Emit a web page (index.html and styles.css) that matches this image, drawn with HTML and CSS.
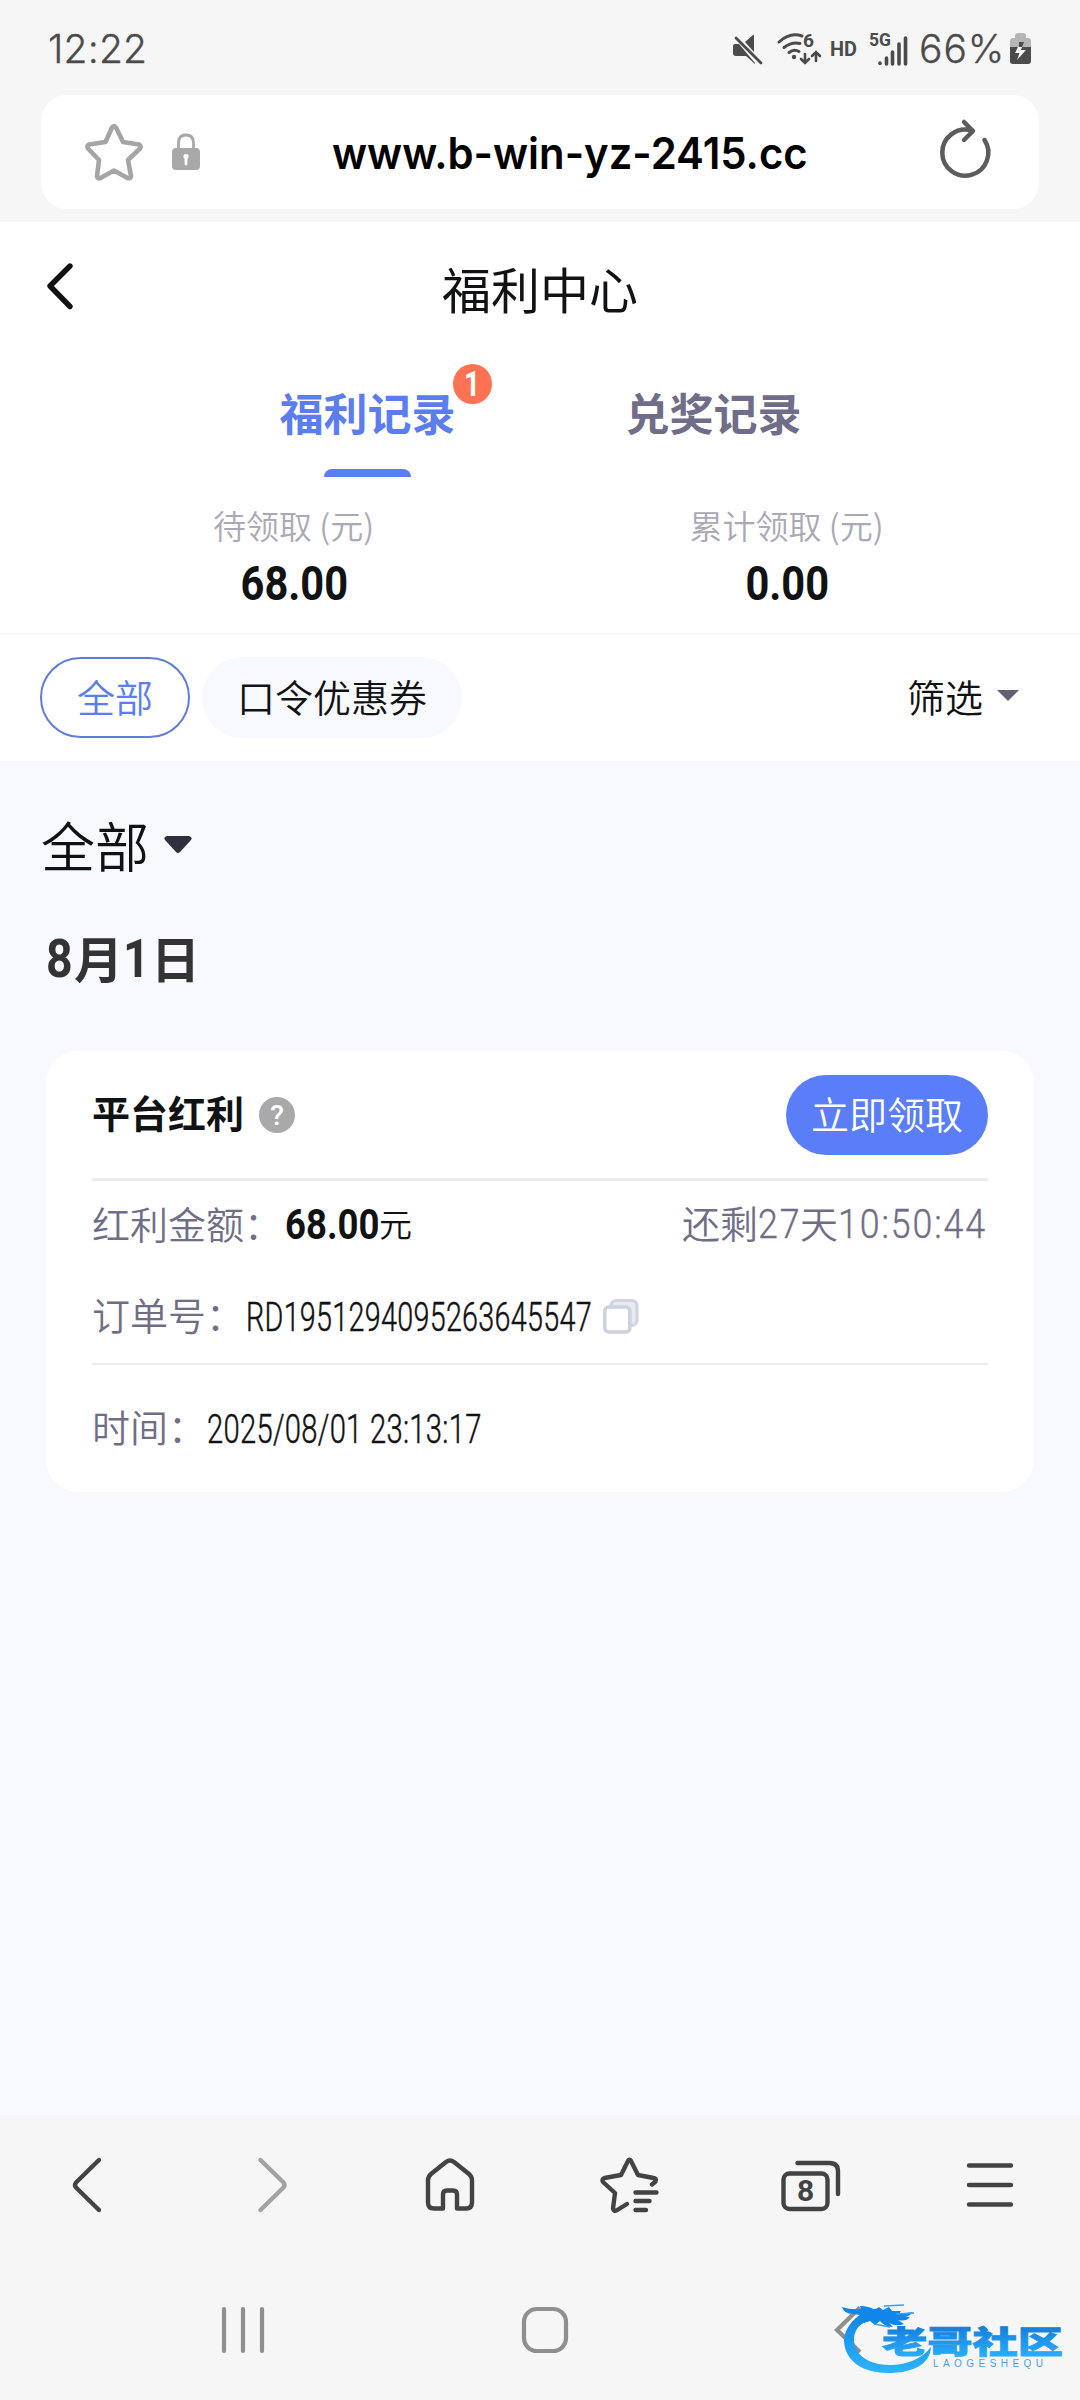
FILE: index.html
```html
<!DOCTYPE html>
<html lang="zh-CN">
<head>
<meta charset="utf-8">
<title>福利中心</title>
<link rel="stylesheet" href="styles.css">
</head>
<body>
<div class="phone">
  <header class="chrome-top">
    <div class="status">
      <span class="clock">12:22</span>
      <svg class="status-icons" viewBox="730 25 186 50" width="186" height="50">
        <g fill="#4b4b4b">
          <path d="M734 46q0-2 2-2h4l16 19v1l-9-8h-10q-3 0-3-3z"/>
          <path d="M746 42l8-7q1-1 1 1v16z"/>
          <path d="M737 38l25 25" stroke="#4b4b4b" stroke-width="2.8" stroke-linecap="round"/>
          <circle cx="795" cy="57" r="2.2"/>
        </g>
        <g fill="none" stroke="#4b4b4b" stroke-width="3" stroke-linecap="round">
          <path d="M780 42q11-10 23-6M785 47.500q8-6 16-4M790 52.500q5-4 10-1"/>
          <path d="M806 54v9m-4-4l4 4 4-4M817 61v-9m-4 4l4-4 4 4" stroke-width="2.600"/>
        </g>
        <g fill="#4b4b4b" font-family="Roboto, sans-serif" font-weight="700">
          <text x="804" y="47" font-size="18" textLength="11" lengthAdjust="spacingAndGlyphs">6</text>
          <text x="831" y="56" font-size="21" textLength="27" lengthAdjust="spacingAndGlyphs">HD</text>
          <text x="870" y="46" font-size="18" textLength="22" lengthAdjust="spacingAndGlyphs">5G</text>
        </g>
        <path d="M881 63v.5M887.500 58v6M893.500 52v12M900 44v20M906.500 38v26" stroke="#4b4b4b" stroke-width="3.600" stroke-linecap="round"/>
      </svg>
      <span class="percent">66%</span>
      <svg class="battery" viewBox="1010 32 23 34" width="23" height="34">
        <path d="M1011 48v-7q0-3 3-3h2v-2q0-3 3-3h5q3 0 3 3v2h2q3 0 3 3v7z" fill="#b5b5b5"/>
        <path d="M1011 47h21v14q0 3-3 3h-15q-3 0-3-3z" fill="#4b4b4b"/>
        <path d="M1020 42h5l-2 5-3 1z" fill="#4b4b4b"/>
        <path d="M1019 47h4l-1 3h5l-9 10 2.500-7h-4.500z" fill="#f6f6f6"/>
      </svg>
    </div>
    <div class="address">
      <svg viewBox="80 118 68 68" width="68" height="68" fill="none" stroke="#a5a5a5" stroke-width="4.600" stroke-linejoin="round">
        <path d="M112 127.500q2-3 4 0l7 14.500 16 2.500q2.500 1.500 1 4l-12 11.500 3 16q-.5 3-3.500 2l-13.500-7.500-13.500 7.500q-3 1-3.500-2l2-16-11-11.500q-1.500-2.500 1-4l16.500-2.500z"/>
      </svg>
      <svg class="lock" viewBox="170 132 32 40" width="32" height="40">
        <path d="M178.500 149v-6q0-8 7.500-8t7.500 8v6" fill="none" stroke="#a8a8a8" stroke-width="2.800"/>
        <rect x="172" y="148" width="28" height="22" rx="4" fill="#a8a8a8"/>
        <circle cx="186" cy="156.500" r="2.600" fill="#fff"/>
        <path d="M186 157v7" stroke="#fff" stroke-width="2.800" stroke-linecap="round"/>
      </svg>
      <span class="url">www.b-win-yz-2415.cc</span>
      <svg class="reload" viewBox="936 116 60 66" width="60" height="66" fill="none" stroke="#5c5c5e" stroke-width="4.500" stroke-linecap="round" stroke-linejoin="round">
        <path d="M984.500 140a23 23 0 1 1-13-9.500M964 122l9 9-9 9"/>
      </svg>
    </div>
  </header>

  <main>
    <section class="top">
      <div class="title-row">
        <svg class="back" viewBox="40 256 40 60" width="40" height="60" fill="none" stroke="#111214" stroke-width="5.400" stroke-linecap="round" stroke-linejoin="round"><path d="M70 266l-20 20 20 20.500"/></svg>
        <h1>福利中心</h1>
      </div>
      <nav class="tabs">
        <div class="tab active">福利记录<span class="badge"><span class="badge-num">1</span></span></div>
        <div class="tab">兑奖记录</div>
      </nav>
      <div class="stats">
        <div class="stat"><span class="stat-label">待领取 (元)</span><b class="stat-value">68.00</b></div>
        <div class="stat"><span class="stat-label">累计领取 (元)</span><b class="stat-value">0.00</b></div>
      </div>
    </section>
    <section class="filters">
      <span class="pill selected">全部</span>
      <span class="pill">口令优惠券</span>
      <span class="filter">筛选</span>
      <svg class="filter-caret" width="22" height="11" viewBox="0 0 22 11"><path d="M0 0h22L11 11z" fill="#62616d"/></svg>
    </section>
    <section class="records">
      <div class="group">全部
        <svg width="28" height="18" viewBox="0 0 28 18"><path d="M3 0h22q4 1 2 4L16 16q-2 2-4 0L1 4q-2-3 2-4z" fill="#2f303d"/></svg>
      </div>
      <h2 class="date"><span class="num">8</span>月<span class="num">1</span>日</h2>
      <article class="card">
        <div class="card-head">
          <span class="card-title">平台红利</span>
          <span class="help">?</span>
          <button class="claim">立即领取</button>
        </div>
        <div class="row amount">
          <span class="label">红利金额：</span>
          <span class="cell amount-cell"><b class="din-bold">68.00</b></span><span class="unit">元</span>
          <span class="remain">还剩<span class="cell days"><span class="din">27</span></span>天<span class="cell time"><span class="din">10:50:44</span></span></span>
        </div>
        <div class="row order">
          <span class="label">订单号：</span>
          <span class="cell order-cell"><span class="din narrow">RD1951294095263645547</span></span>
          <svg class="copy" viewBox="0 0 36 35" width="36" height="35">
            <rect x="8" y="1.500" width="26" height="25" rx="5" fill="#e6eaf4" stroke="#d0d4e0" stroke-width="3"/>
            <rect x="1.800" y="8" width="25" height="25" rx="4" fill="#fff" stroke="#ced2df" stroke-width="3.600"/>
          </svg>
        </div>
        <div class="row when">
          <span class="label">时间：</span>
          <span class="cell"><span class="din narrow stamp">2025/08/01 23:13:17</span></span>
        </div>
      </article>
    </section>
  </main>

  <footer class="chrome-bottom">
    <div class="toolbar">
      <svg viewBox="54 2148 72 72"><path d="M99 2159l-23 22.500q-2 2.500 0 5l23 22.500"/></svg>
      <svg viewBox="234 2148 72 72" class="dim"><path d="M260.500 2159l23 22.500q2 2.500 0 5l-23 22.500"/></svg>
      <svg viewBox="414 2148 72 72"><path d="M443 2207.500h-9q-6 0-6-6v-22q0-4 3-6.500l15-12q4-3 8 0l15 12q3 2.500 3 6.500v22q0 6-6 6h-9v-14q0-4-4-4h-6q-4 0-4 4z"/></svg>
      <svg viewBox="594 2148 72 72"><path d="M652 2183.500l3.500-3q1.500-3-2-3.500l-15.500-3-7-14q-1.500-2.500-3 0l-7 14-16.500 3q-3 1-1.500 4l12 11-2 15.500q.5 3 3.500 2l10.500-6.500M635.500 2191.500h21M635.500 2200h14M635.500 2209h10.500"/></svg>
      <svg viewBox="774 2148 72 72">
        <rect x="783.500" y="2172.500" width="44" height="35.500" rx="6"/>
        <path d="M797.500 2162h32q8.500 0 8.500 8.500v22.500"/>
        <text x="805.500" y="2200" text-anchor="middle">8</text>
      </svg>
      <svg viewBox="954 2148 72 72"><path d="M969 2164.500h42M969 2184h42M969 2203.500h42"/></svg>
    </div>
    <div class="sysnav">
      <svg viewBox="213 2300 60 60"><path d="M224 2309v42M243 2309v42M262 2309v42"/></svg>
      <svg viewBox="515 2300 60 60"><rect x="524" y="2309" width="42" height="42" rx="13"/></svg>
      <svg viewBox="817 2300 60 60"><path d="M860 2307.500l-23 22.500 23 22" stroke-linecap="butt"/></svg>
    </div>
    <svg class="watermark" viewBox="836 2296 236 84" width="236" height="84">
      <defs>
        <linearGradient id="ring" x1="0" y1="0" x2="0" y2="1"><stop offset="0" stop-color="#0e80e6"/><stop offset="1" stop-color="#2cb4fb"/></linearGradient>
        <linearGradient id="word" gradientUnits="userSpaceOnUse" x1="0" y1="2327" x2="0" y2="2356"><stop offset="0" stop-color="#147fdc"/><stop offset="1" stop-color="#29adfa"/></linearGradient>
      </defs>
      <path fill="url(#ring)" d="M880 2308C856 2311 844 2328 844 2341C845 2362 864 2373 888 2373C912 2373 930 2365 931 2347C922 2359 906 2365 890 2365C868 2365 853 2354 854 2338C855 2326 864 2320 882 2317z"/>
      <path fill="#0e86ea" d="M842 2307q9 3 19 2l-1-3q9 0 15 4l4-3 4 3 6-3 3 4 9 0-2 3 14-2q-5 6-12 4l9 1q-4 5-12 3l6 4q-8 3-15-1l4 4q-8 0-13-6l-5 4-5-4-6 2-4-8-7-1q-9 0-11-7z"/>
      <path d="M884 2306l20-1M896 2314l18-1M874 2324l16 3" stroke="#3d9fee" stroke-width="1.500" fill="none"/>
      <text class="wm-word" x="882" y="2353" textLength="181" lengthAdjust="spacingAndGlyphs" fill="url(#word)" stroke="url(#word)">老哥社区</text>
      <text class="wm-sub" x="933" y="2367" textLength="110">LAOGESHEQU</text>
    </svg>
  </footer>
</div>
</body>
</html>
```
FILE: styles.css
```css
* { box-sizing: border-box; }
body {
  margin: 0;
  background: #f6f6f6;
  font-family: "Noto Sans CJK SC", sans-serif;
  color: #111214;
}
.phone {
  position: relative;
  width: 1080px;
  height: 2400px;
  display: flex;
  flex-direction: column;
  overflow: hidden;
}
svg { display: block; flex: none; }
h1, h2 { margin: 0; font-weight: 400; }

/* browser chrome */
.chrome-top { height: 222px; background: #f6f6f6; }
.status {
  height: 95px;
  padding: 0 48px 0 48px;
  display: flex;
  align-items: center;
  font-family: Inter, sans-serif;
  font-weight: 300;
  font-size: 39px;
  line-height: 98px;
  color: #4b4b4b;
}
.clock { width: 682px; letter-spacing: .2px; }
.status-icons { margin-top: 5px; }
.percent { width: 94px; padding-left: 4px; letter-spacing: .9px; white-space: nowrap; }
.clock, .percent { padding-top: 2px; -webkit-text-stroke: .3px #4b4b4b; }
.battery { margin-top: 3px; }
.address {
  height: 114px;
  margin: 0 41px;
  padding: 0 43px 0 39px;
  border-radius: 26px;
  background: #fff;
  display: flex;
  align-items: center;
}
.lock { margin-left: 22px; }
.url {
  width: 476px;
  margin-left: 130px;
  padding-top: 1px;
  font-family: Inter, sans-serif;
  font-weight: 600;
  font-size: 44px;
  line-height: 60px;
  color: #000;
  white-space: nowrap;
  transform: scaleX(.95);
  transform-origin: left;
}
.reload { margin-left: auto; margin-top: -6px; }

/* page head */
.top { height: 411px; background: #fff; }
.title-row { height: 128px; display: flex; align-items: center; padding-left: 40px; }
.title-row h1 { width: 1000px; padding-right: 80px; text-align: center; font-size: 49px; line-height: 60px; margin-top: 4px; }
.tabs { height: 127px; display: flex; justify-content: center; gap: 170px; padding-left: 1px; }
.tab {
  position: relative;
  width: 176px;
  padding-top: 29px;
  text-align: center;
  font-size: 44px;
  line-height: 66px;
  font-weight: 700;
  color: #6f6d88;
}
.tab.active { color: #5b7df0; }
.tab.active::after {
  content: "";
  position: absolute;
  left: 44px;
  bottom: 0;
  width: 87px;
  height: 8px;
  border-radius: 8px 8px 0 0;
  background: #5a7df3;
}
.badge {
  position: absolute;
  left: 173px;
  top: 14px;
  width: 39px;
  height: 40px;
  border-radius: 50%;
  background: #ff7354;
  color: #fff;
  font: 700 35px/41px Roboto, sans-serif;
  text-align: center;
}
.badge-num { display: inline-block; transform: scaleX(.8); }
.stats { display: flex; justify-content: center; }
.stat { width: 493px; display: flex; flex-direction: column; align-items: center; padding-top: 24px; }
.stat-label { font-size: 33px; line-height: 48px; font-weight: 350; color: #aaa9b5; }
.stat-value { font: 700 49px/60px Roboto, sans-serif; transform: scaleX(.85); margin: 5px 0 0 2px; }

.filters {
  height: 128px;
  padding: 0 61px 2px 40px;
  border-top: 2px solid #f8f8fa;
  background: #fff;
  display: flex;
  align-items: center;
  font-size: 38px;
  font-weight: 350;
  line-height: 56px;
}
.pill { height: 81px; line-height: 77px; padding: 0 35px; border-radius: 41px; background: #f8f9fe; }
.pill.selected { padding: 0 35px; border: 2px solid #5e7ddb; background: #fff; color: #5b7df0; margin-right: 12px; line-height: 73px; }
.filter { margin-left: auto; padding-bottom: 2px; }
.filter-caret { margin-left: 14px; margin-top: -3px; }

/* records */
.records { height: 1354px; padding: 44px 46px 0 41px; background: #f8f9fe; }
.group { display: flex; align-items: center; gap: 15px; font-size: 54px; line-height: 80px; font-weight: 350; }
.date { display: flex; margin: 37px 0 0 5px; font-size: 49px; line-height: 70px; font-weight: 700; color: #333; }
.date .num { width: 28px; padding-top: 1px; font: 700 54px/72px Roboto, sans-serif; transform: scaleX(.86); transform-origin: left; }
.card { margin: 56px 0 0 5px; width: 988px; height: 441px; padding: 0 46px; border-radius: 32px; background: #fff; }
.card-head { height: 130px; display: flex; align-items: center; border-bottom: 3px solid #ececec; }
.card-title { font-size: 38px; font-weight: 700; line-height: 56px; padding-bottom: 6px; }
.help {
  width: 36px;
  height: 36px;
  margin-left: 15px;
  border-radius: 50%;
  background: #a9a9a9;
  color: #fff;
  font: 500 28px/37px Roboto, sans-serif;
  text-align: center;
}
.claim {
  width: 202px;
  height: 80px;
  margin-left: auto;
  padding: 0 0 5px;
  border: 0;
  border-radius: 40px;
  background: #5a7df8;
  color: #fff;
  font: 350 38px/75px "Noto Sans CJK SC", sans-serif;
}
.row { display: flex; align-items: center; font-size: 38px; font-weight: 350; }
.label, .remain { color: #706e86; line-height: 56px; }
.cell { display: inline-block; white-space: nowrap; }
.din { display: inline-block; font-family: Roboto, sans-serif; font-weight: 300; font-size: 41px; letter-spacing: 2.2px; transform: scaleX(.87); transform-origin: left; -webkit-text-stroke: .4px #706e86; }
.din.narrow { letter-spacing: .4px; transform: scaleX(.701); -webkit-text-stroke: .5px #111214; }
.din.stamp { transform: scaleX(.712); margin-left: 1px; }
.din-bold { display: inline-block; font: 700 43px/56px Roboto, sans-serif; transform: scaleX(.85); transform-origin: left; }
.amount { height: 84px; }
.amount-cell { width: 94px; margin-left: 3px; }
.unit { font-size: 33px; line-height: 56px; }
.remain { margin-left: auto; display: flex; }
.days { width: 42px; }
.time { width: 150px; }
.order { height: 100px; border-bottom: 2px solid #ececec; }
.order-cell { width: 345px; margin-left: 2px; }
.copy { margin-left: 12px; margin-top: 4px; }
.when { height: 122px; }

/* bottom */
.chrome-bottom { position: relative; height: 285px; background: #f6f6f6; }
.toolbar { height: 139px; display: grid; grid-template-columns: repeat(6, 1fr); place-items: center; }
.toolbar svg { width: 72px; height: 72px; fill: none; stroke: #434343; stroke-width: 4.4; stroke-linecap: round; stroke-linejoin: round; }
.toolbar .dim { stroke: #a2a2a2; }
.toolbar text { fill: #434343; stroke: none; font: 700 30px Roboto, sans-serif; }
.sysnav { height: 152px; padding-left: 92px; display: grid; grid-template-columns: repeat(3, 302px); place-items: center; }
.sysnav svg { width: 60px; height: 60px; fill: none; stroke: #8f8f8f; stroke-width: 4.2; stroke-linecap: round; }
.watermark { position: absolute; left: 836px; top: 181px; }
.wm-word { font: 900 31px "Noto Sans CJK SC", sans-serif; stroke-width: .8px; }
.wm-sub { font: 400 10px "Liberation Sans", sans-serif; fill: #4ba3e6; }
```
